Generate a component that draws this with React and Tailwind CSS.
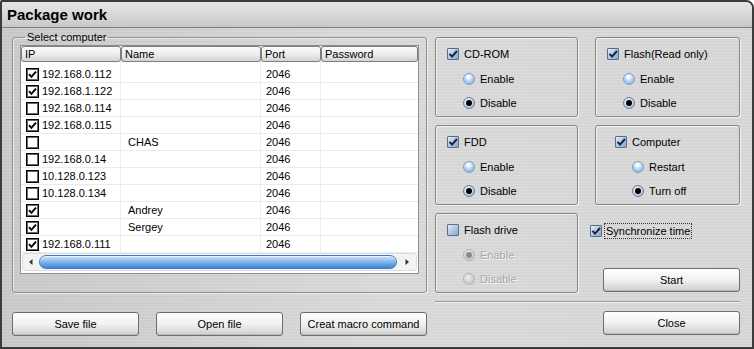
import React from "react";

const rows = [
  { c: true, ip: "192.168.0.112", name: "" },
  { c: true, ip: "192.168.1.122", name: "" },
  { c: false, ip: "192.168.0.114", name: "" },
  { c: true, ip: "192.168.0.115", name: "" },
  { c: false, ip: "", name: "CHAS" },
  { c: false, ip: "192.168.0.14", name: "" },
  { c: false, ip: "10.128.0.123", name: "" },
  { c: false, ip: "10.128.0.134", name: "" },
  { c: true, ip: "", name: "Andrey" },
  { c: true, ip: "", name: "Sergey" },
  { c: true, ip: "192.168.0.111", name: "" },
];

function TableCheck({ checked }) {
  return (
    <span className="w-[13px] h-[13px] shrink-0 border border-black bg-white shadow-[inset_0_0_0_1px_#666] flex items-center justify-center">
      {checked && (
        <svg width="9" height="9" viewBox="0 0 9 9">
          <path d="M1 4.2 L3.4 6.8 L8 1.6" stroke="#000" strokeWidth="1.9" fill="none" />
        </svg>
      )}
    </span>
  );
}

function XpCheck({ checked }) {
  return (
    <span className="w-[12px] h-[12px] shrink-0 rounded-[1px] border border-[#55708f] bg-linear-to-br from-[#e3ecf7] via-[#b3c7e2] to-[#8aa6cc] flex items-center justify-center">
      {checked && (
        <svg width="10" height="10" viewBox="0 0 10 10">
          <path d="M1.5 4.8 L4 7.6 L9 2" stroke="#1b2236" strokeWidth="2" fill="none" />
        </svg>
      )}
    </span>
  );
}

function Radio({ selected, disabled }) {
  return (
    <span
      className={
        "w-[12px] h-[12px] shrink-0 rounded-full flex items-center justify-center " +
        (disabled
          ? "bg-[radial-gradient(circle_at_40%_35%,#f0f0f0,#b8b8b8)] border border-[#b4b4b4]"
          : selected
          ? "bg-[radial-gradient(circle_at_40%_35%,#ffffff,#8fa9c8)] border border-[#6a7f99]"
          : "bg-[radial-gradient(circle_at_45%_30%,#ffffff_10%,#bcd8f5_45%,#6f9fd6)] border border-[#7fa0c8]")
      }
    >
      {selected && <span className={"w-[6px] h-[6px] rounded-full " + (disabled ? "bg-[#8a8a8a]" : "bg-black")} />}
    </span>
  );
}

function RadioRow({ label, selected, disabled, indent = "pl-[27px]" }) {
  return (
    <div className={"h-[24px] flex items-center gap-[5px] " + indent}>
      <Radio selected={selected} disabled={disabled} />
      <span className={disabled ? "text-[#a8a8a8] [text-shadow:1px_1px_0_#f4f4f4]" : ""}>{label}</span>
    </div>
  );
}

function Panel({ children, className = "" }) {
  return (
    <div className={"h-[80px] rounded-[3px] border border-[#868686] shadow-[inset_1px_1px_0_#efefef,1px_1px_0_#f0f0f0] pt-[5px] " + className}>
      {children}
    </div>
  );
}

function CheckRow({ label, checked, indent = "pl-[11px]" }) {
  return (
    <div className={"h-[22px] mb-[2px] flex items-center gap-[5px] " + indent}>
      <XpCheck checked={checked} />
      <span>{label}</span>
    </div>
  );
}

function Button({ children, className = "" }) {
  return (
    <button className={"h-[24px] rounded-[3px] border border-[#6e6e6e] bg-linear-to-b from-[#ffffff] via-[#f1f1f1] to-[#cfcfcf] shadow-[inset_0_-1px_0_#b9b9b9,inset_0_1px_0_#ffffff] text-[11px] text-black flex items-center justify-center " + className}>
      {children}
    </button>
  );
}

const cols = ["w-[100px]", "w-[140px]", "w-[60px]", "flex-1"];

export default function App() {
  return (
    <div className="w-[754px] h-[349px] box-border border-2 border-[#3b3b3b] rounded-tr-[8px] rounded-tl-[2px] overflow-hidden flex flex-col font-['Liberation_Sans',Arial,sans-serif] text-[11px] text-black bg-linear-to-r from-[#c9c9c9] via-[#d9d9d9] to-[#d7d7d7]">
      {/* title */}
      <div className="h-[26px] shrink-0 border-b border-[#7c7c7c] bg-linear-to-b from-[#e6e6e6] via-[#d8d8d8] to-[#c8c8c8] flex items-center pl-[5px]">
        <span className="text-[15px] font-bold leading-none">Package work</span>
      </div>

      <div className="flex-1 flex pl-[10px] pt-[3px] gap-[8px] bg-[repeating-linear-gradient(0deg,rgba(255,255,255,0.10)_0px,rgba(255,255,255,0.10)_1px,rgba(0,0,0,0.03)_2px,rgba(0,0,0,0)_3px)]">
        {/* left column */}
        <div className="w-[415px] flex flex-col">
          <fieldset className="h-[262px] border border-[#8f8f8f] rounded-[3px] shadow-[inset_1px_1px_0_#ececec,1px_1px_0_#ececec] px-[7px] pt-[1px] pb-[7px] flex flex-col">
            <legend className="ml-[5px] px-[2px] leading-[13px]">Select computer</legend>
            <div className="flex-1 border border-[#8d8d8d] bg-white flex flex-col">
              {/* header */}
              <div className="h-[16px] flex shrink-0 bg-[#e8e8e8]">
                {["IP", "Name", "Port", "Password"].map((h, i) => (
                  <div
                    key={h}
                    className={cols[i] + " h-full border border-[#7e7e7e] rounded-[3px] bg-linear-to-b from-[#fbfbfb] via-[#eeeeee] to-[#d3d3d3] pl-[3px] flex items-center leading-none"}
                  >
                    {h}
                  </div>
                ))}
              </div>
              <div className="h-[4px] flex shrink-0">
                {cols.map((c, i) => (
                  <div key={i} className={c + (i < 3 ? " border-r border-[#ececec]" : "")} />
                ))}
              </div>
              {rows.map((r, idx) => (
                <div key={idx} className="h-[17px] flex shrink-0 border-b border-[#ebebeb]">
                  <div className={cols[0] + " flex items-center pl-[5px] gap-[3px] border-r border-[#ececec]"}>
                    <TableCheck checked={r.c} />
                    <span>{r.ip}</span>
                  </div>
                  <div className={cols[1] + " flex items-center pl-[7px] border-r border-[#ececec]"}>{r.name}</div>
                  <div className={cols[2] + " flex items-center pl-[5px] border-r border-[#ececec]"}>2046</div>
                  <div className={cols[3]} />
                </div>
              ))}
              <div className="flex-1 flex">
                {cols.map((c, i) => (
                  <div key={i} className={c + (i < 3 ? " border-r border-[#ececec]" : "")} />
                ))}
              </div>
              {/* scrollbar */}
              <div className="h-[18px] shrink-0 mx-[1px] mb-[2px] rounded-[3px] border border-[#dcdcdc] bg-[#f3f3f3] flex items-center pl-[3px] pr-[2px] gap-[3px]">
                <span className="w-[10px] flex justify-center">
                  <svg width="4" height="6" viewBox="0 0 4 6"><path d="M3.5 0 L0 3 L3.5 6 Z" fill="#333" /></svg>
                </span>
                <div className="flex-1 h-[14px] rounded-full border border-[#3f7cc2] bg-linear-to-b from-[#cfe5fb] via-[#7fb4ea] to-[#3e86d5] shadow-[inset_0_1px_0_#eaf4ff]" />
                <span className="w-[14px] flex justify-center">
                  <svg width="4" height="6" viewBox="0 0 4 6"><path d="M0.5 0 L4 3 L0.5 6 Z" fill="#333" /></svg>
                </span>
              </div>
            </div>
          </fieldset>
          <div className="mt-[19px] flex gap-[17px]">
            <Button className="w-[127px]">Save file</Button>
            <Button className="w-[127px]">Open file</Button>
            <Button className="w-[127px]">Creat macro command</Button>
          </div>
        </div>

        {/* right column */}
        <div className="w-[305px] mt-[6px] flex flex-col">
          <div className="grid grid-cols-[143px_145px] gap-x-[17px] gap-y-[8px]">
            <Panel>
              <CheckRow label="CD-ROM" checked />
              <RadioRow label="Enable" />
              <RadioRow label="Disable" selected />
            </Panel>
            <Panel>
              <CheckRow label="Flash(Read only)" checked />
              <RadioRow label="Enable" />
              <RadioRow label="Disable" selected />
            </Panel>
            <Panel>
              <CheckRow label="FDD" checked />
              <RadioRow label="Enable" />
              <RadioRow label="Disable" selected />
            </Panel>
            <Panel>
              <CheckRow label="Computer" checked indent="pl-[19px]" />
              <RadioRow label="Restart" indent="pl-[36px]" />
              <RadioRow label="Turn off" selected indent="pl-[36px]" />
            </Panel>
            <Panel>
              <CheckRow label="Flash drive" />
              <RadioRow label="Enable" selected disabled />
              <RadioRow label="Disable" disabled />
            </Panel>
            <div className="h-[80px] flex flex-col">
              <div className="h-[34px] flex items-center gap-[2px] -ml-[5px] pt-[1px]">
                <XpCheck checked />
                <span className="border border-dotted border-[#333] px-[1px] leading-[14px]">Synchronize time</span>
              </div>
              <Button className="mt-auto mb-[1px] ml-[8px] w-[137px]">Start</Button>
            </div>
          </div>
          <div className="mt-[8px] h-[2px] border-t border-[#9a9a9a] border-b border-b-[#f3f3f3]" />
          <Button className="mt-[8px] ml-[168px] w-[137px]">Close</Button>
        </div>
      </div>
    </div>
  );
}
